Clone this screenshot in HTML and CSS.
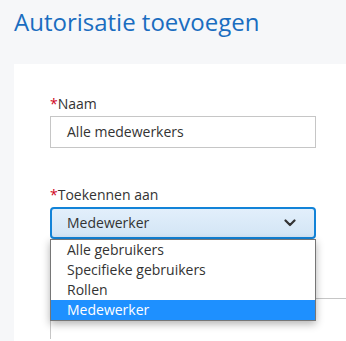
FILE: index.html
```html
<!DOCTYPE html>
<html lang="nl">
<head>
  <meta charset="UTF-8">
  <meta name="viewport" content="width=device-width, initial-scale=1.0">
  <title>Autorisatie toevoegen</title>
  <link rel="stylesheet" href="styles.css">
</head>
<body>
  <h1 class="page-title">Autorisatie toevoegen</h1>

  <!-- Form card -->
  <div class="card">
    <div class="field">
      <label class="field-label"><span class="required">*</span>Naam</label>
      <div class="text-input">Alle medewerkers</div>
    </div>

    <div class="field field-select">
      <label class="field-label"><span class="required">*</span>Toekennen aan</label>
      <div class="select">
        <span>Medewerker</span>
        <svg class="chevron" width="12" height="8" viewBox="0 0 12 8">
          <path d="M1.5 1.5 L6 6 L10.5 1.5" fill="none" stroke="#333" stroke-width="2.2" stroke-linecap="round" stroke-linejoin="round"/>
        </svg>
      </div>

      <!-- Open dropdown -->
      <ul class="options">
        <li>Alle gebruikers</li>
        <li>Specifieke gebruikers</li>
        <li>Rollen</li>
        <li class="selected">Medewerker</li>
      </ul>
    </div>

    <div class="next-box"></div>
  </div>
</body>
</html>
```

FILE: styles.css
```css
/* General Styles */
body {
  margin: 0;
  padding: 0;
  background: #f6f7f9;
  font-family: 'Open Sans', 'Noto Sans', sans-serif;
  color: #333;
}

.page-title {
  margin: 0;
  padding: 5px 14px 0;
  font-size: 24px;
  line-height: 33px;
  font-weight: 400;
  color: #1a6dc0;
}

/* Card */
.card {
  margin: 26px 0 0 14px;
  padding: 30px 0 0 36px;
  background: #fff;
  height: 247px;
}

.field {
  width: 266px;
}

.field-label {
  display: block;
  font-size: 14px;
  line-height: 20px;
  margin-bottom: 2px;
}

.required {
  color: #d0021b;
}

.text-input {
  box-sizing: border-box;
  height: 32px;
  border: 1px solid #c6c6c6;
  padding: 0 16px;
  font-size: 14px;
  line-height: 30px;
}

/* Select */
.field-select {
  position: relative;
  margin-top: 37px;
}

.select {
  box-sizing: border-box;
  height: 32px;
  border: 2px solid #1283d8;
  border-radius: 4px;
  padding: 0 15px;
  background: linear-gradient(#e2effb, #d3e5f5);
  font-size: 14px;
  line-height: 28px;
  display: flex;
  justify-content: space-between;
  align-items: center;
}

.chevron {
  margin-right: 3px;
}

.options {
  position: absolute;
  top: 100%;
  left: 0;
  right: 0;
  margin: 0;
  padding: 0;
  list-style: none;
  background: #fff;
  border: 1px solid #767676;
  box-shadow: 0 3px 8px rgba(0, 0, 0, 0.3);
  z-index: 2;
}

.options li {
  font-size: 14px;
  line-height: 20px;
  padding: 0 16px;
}

.options .selected {
  background: #1e90ff;
  color: #fff;
}

/* Field below the dropdown */
.next-box {
  margin-top: 59px;
  height: 40px;
  border-top: 1px solid #c6c6c6;
  border-left: 1px solid #c6c6c6;
}
```
